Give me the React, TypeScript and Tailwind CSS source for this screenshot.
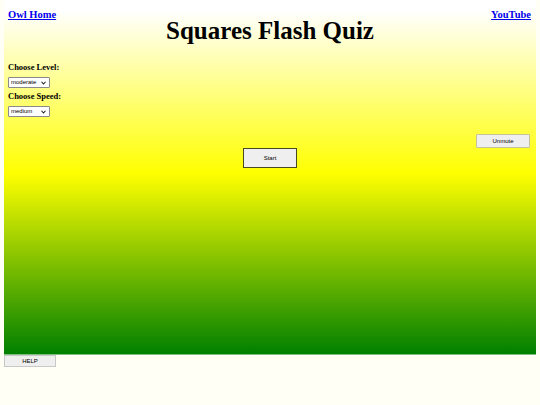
function Select({ value, options }: { value: string; options: string[] }) {
  return (
    <div className="relative h-[11px] w-[42px]">
      <select
        defaultValue={value}
        className="block h-full w-full appearance-none rounded-[1px] border border-[#8a8a8a] bg-white pl-[2px] font-['Liberation_Sans',sans-serif] text-[6px] leading-[9px] text-black outline-none"
      >
        {options.map((o) => (
          <option key={o}>{o}</option>
        ))}
      </select>
      <svg
        className="pointer-events-none absolute right-[4px] top-[3.5px] h-[4px] w-[5px]"
        viewBox="0 0 10 8"
        fill="none"
        stroke="#222"
        strokeWidth="2.2"
      >
        <path d="M1 1.5 5 6 9 1.5" />
      </svg>
    </div>
  );
}

export default function App() {
  return (
    <div className="min-h-[405px] w-full bg-[#fffff6] font-['Liberation_Serif',serif]">
      <div className="mx-[4px] flex h-[354px] flex-col bg-[linear-gradient(to_bottom,#ffffff_3%,#ffff00_49%,#008000_100%)]">
        <div className="grid grid-cols-[1fr_auto_1fr] items-start px-[4px] pt-[8px]">
          <a href="#" className="justify-self-start text-[10.5px] font-bold leading-[13px] text-[#0000ee] underline">
            Owl Home
          </a>
          <h1 className="mt-[8px] text-[25px] font-bold leading-[30px] text-black">Squares Flash Quiz</h1>
          <a href="#" className="justify-self-end pr-[1px] text-[10.5px] font-bold leading-[13px] text-[#0000ee] underline">
            YouTube
          </a>
        </div>

        <div className="mt-[15px] flex flex-col items-start px-[4px]">
          <h3 className="text-[8.5px] font-bold leading-[13px] text-black">Choose Level:</h3>
          <div className="mt-[3px]">
            <Select value="moderate" options={['easy', 'moderate', 'hard']} />
          </div>
          <h3 className="mt-[2px] text-[8.5px] font-bold leading-[13px] text-black">Choose Speed:</h3>
          <div className="mt-[3px]">
            <Select value="medium" options={['slow', 'medium', 'fast']} />
          </div>
        </div>

        <div className="mt-[17px] flex justify-end pr-[6px]">
          <button className="h-[14px] w-[54px] rounded-[1px] border border-[#c4c49a] bg-[#efefef] font-['Liberation_Sans',sans-serif] text-[6px] text-black">
            Unmute
          </button>
        </div>
        <div className="flex justify-center">
          <button className="h-[20px] w-[54px] border border-[#4a4a22] bg-[#efefef] font-['Liberation_Sans',sans-serif] text-[6px] text-black">
            Start
          </button>
        </div>
      </div>
      <div className="mx-[4px] h-px bg-[#7fc07f]" />
      <div className="flex px-[4px]">
        <button className="h-[12px] w-[52px] border border-[#c8c8c8] bg-[#efefef] font-['Liberation_Sans',sans-serif] text-[6px] text-black">
          HELP
        </button>
      </div>
    </div>
  );
}
